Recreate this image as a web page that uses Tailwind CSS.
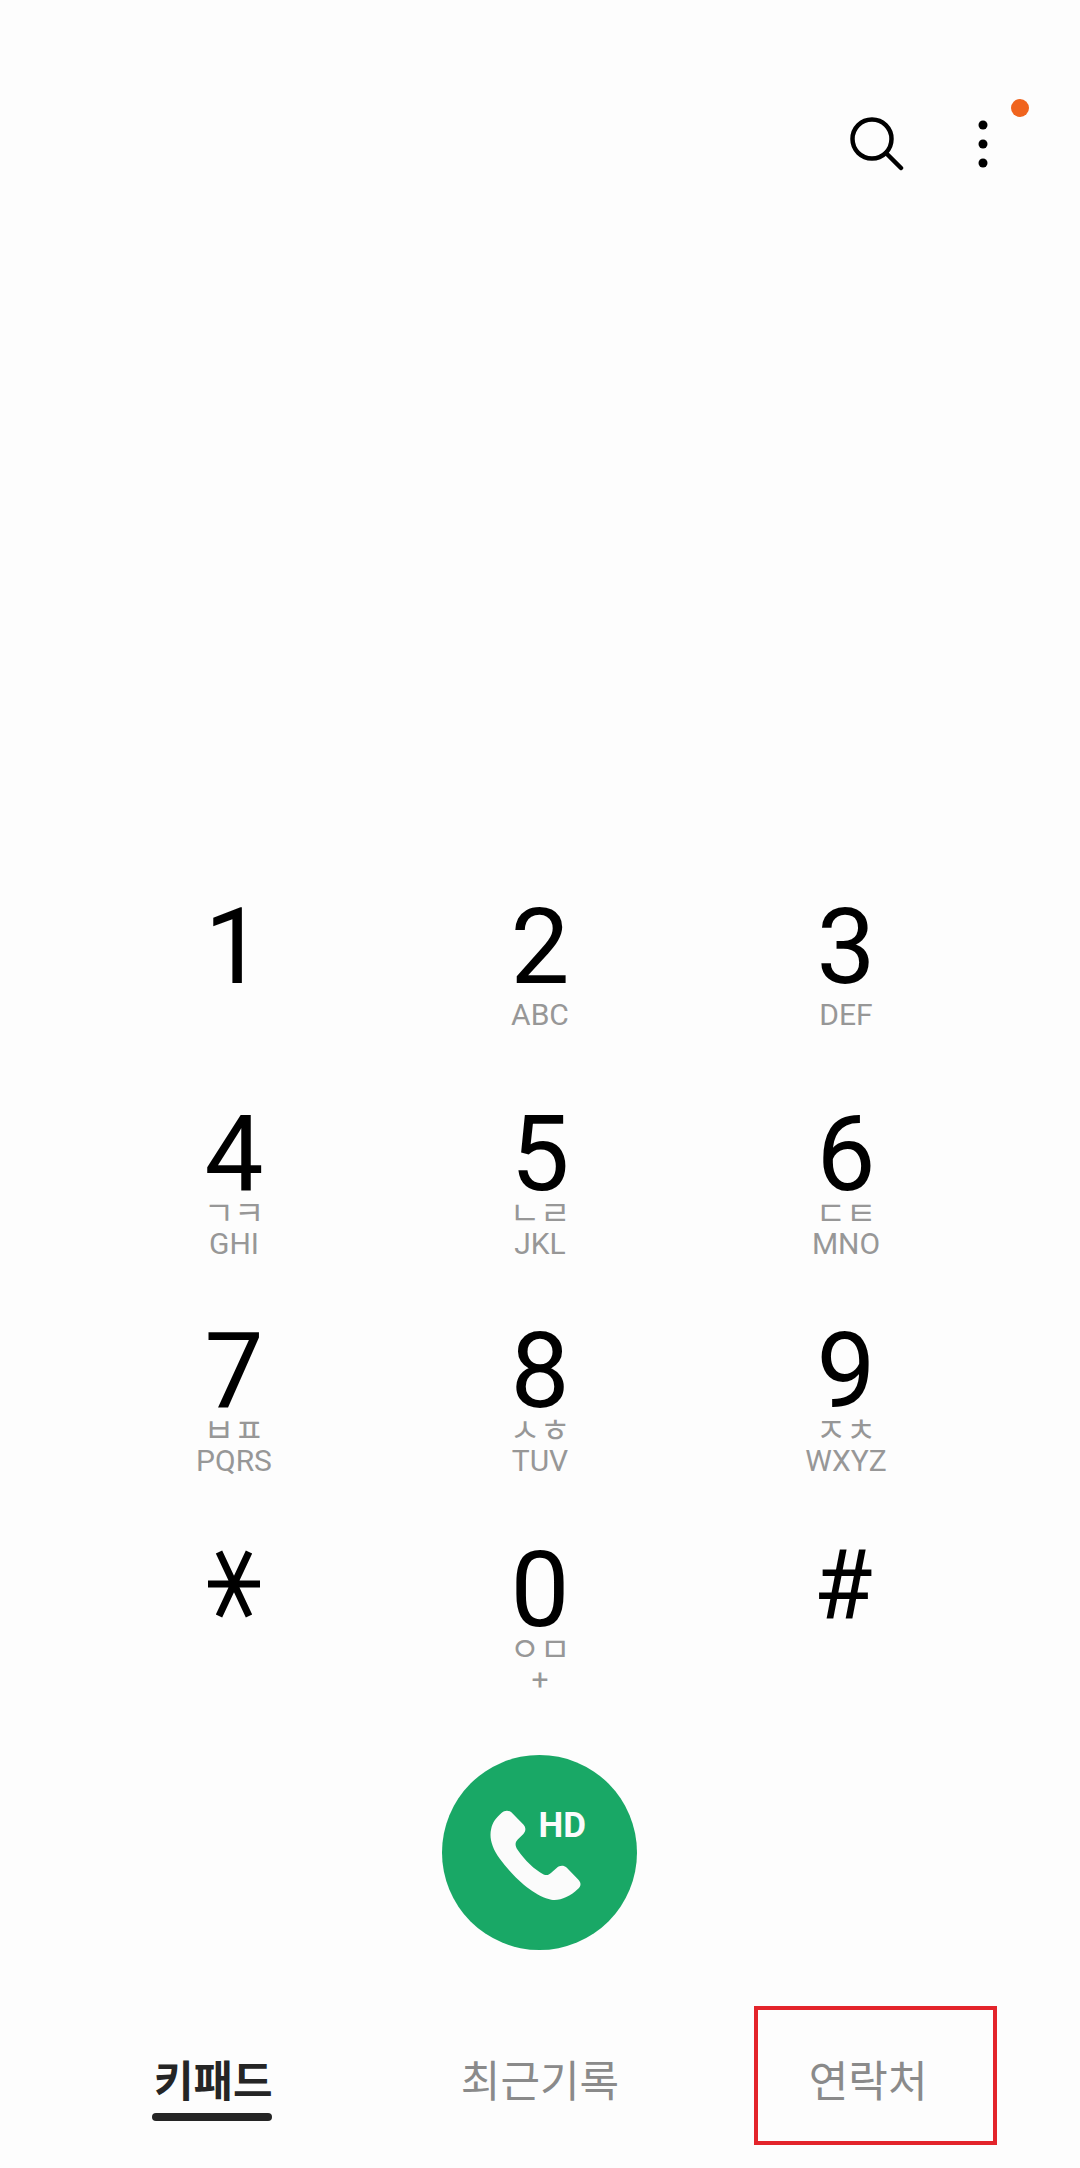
<!DOCTYPE html>
<html lang="ko">
<head>
    <meta charset="UTF-8">
    <title>전화</title>
    <script src="https://cdn.jsdelivr.net/npm/@tailwindcss/browser@4"></script>
</head>
<body class="h-[2168px] w-[1080px] overflow-hidden bg-[#fdfdfd] font-[family-name:Roboto,'Noto_Sans_CJK_KR',sans-serif]">
    <!-- top icons -->
    <header class="flex h-[909px] items-start justify-end gap-[67px] pt-[100px] pr-[85px]">
        <svg class="w-[64px] h-[72px]" viewBox="0 0 64 72" fill="none" stroke="#000" stroke-width="4.5" stroke-linecap="round">
            <circle cx="32" cy="39" r="19.5"/>
            <path d="M46 53 L61 68"/>
        </svg>
        <div class="relative w-[24px] h-[72px]">
            <svg class="w-[24px] h-[72px]" viewBox="0 0 24 72" fill="#000">
                <circle cx="12" cy="25" r="4.5"/>
                <circle cx="12" cy="44" r="4.5"/>
                <circle cx="12" cy="63" r="4.5"/>
            </svg>
            <span class="absolute left-[40px] top-[-1px] w-[18px] h-[18px] rounded-full bg-[#f0641e]"></span>
        </div>
    </header>

    <!-- keypad -->
    <main class="grid grid-cols-3 grid-rows-[207px_217px_219px_203px] px-[81px] text-black">
        <div class="flex flex-col items-center">
            <span class="text-[105px] leading-[78px]">1</span>
        </div>
        <div class="flex flex-col items-center">
            <span class="text-[105px] leading-[78px]">2</span>
            <span class="mt-[13px] text-[30px] leading-[30px] text-[#979797]">ABC</span>
        </div>
        <div class="flex flex-col items-center">
            <span class="text-[105px] leading-[78px]">3</span>
            <span class="mt-[13px] text-[30px] leading-[30px] text-[#979797]">DEF</span>
        </div>

        <div class="flex flex-col items-center">
            <span class="text-[105px] leading-[78px]">4</span>
            <span class="mt-[9px] text-[33px] leading-[22px] text-[#979797]">ㄱㅋ</span>
            <span class="mt-[4px] text-[30px] leading-[30px] text-[#979797]">GHI</span>
        </div>
        <div class="flex flex-col items-center">
            <span class="text-[105px] leading-[78px]">5</span>
            <span class="mt-[9px] text-[33px] leading-[22px] text-[#979797]">ㄴㄹ</span>
            <span class="mt-[4px] text-[30px] leading-[30px] text-[#979797]">JKL</span>
        </div>
        <div class="flex flex-col items-center">
            <span class="text-[105px] leading-[78px]">6</span>
            <span class="mt-[9px] text-[33px] leading-[22px] text-[#979797]">ㄷㅌ</span>
            <span class="mt-[4px] text-[30px] leading-[30px] text-[#979797]">MNO</span>
        </div>

        <div class="flex flex-col items-center">
            <span class="text-[105px] leading-[78px]">7</span>
            <span class="mt-[9px] text-[33px] leading-[22px] text-[#979797]">ㅂㅍ</span>
            <span class="mt-[4px] text-[30px] leading-[30px] text-[#979797]">PQRS</span>
        </div>
        <div class="flex flex-col items-center">
            <span class="text-[105px] leading-[78px]">8</span>
            <span class="mt-[9px] text-[33px] leading-[22px] text-[#979797]">ㅅㅎ</span>
            <span class="mt-[4px] text-[30px] leading-[30px] text-[#979797]">TUV</span>
        </div>
        <div class="flex flex-col items-center">
            <span class="text-[105px] leading-[78px]">9</span>
            <span class="mt-[9px] text-[33px] leading-[22px] text-[#979797]">ㅈㅊ</span>
            <span class="mt-[4px] text-[30px] leading-[30px] text-[#979797]">WXYZ</span>
        </div>

        <div class="flex flex-col items-center">
            <svg class="-mt-[2px] w-[56px] h-[68px]" viewBox="0 0 56 68" stroke="#000" stroke-width="7" aria-label="*">
                <path d="M2 34 H54 M13 2 L43 66 M43 2 L13 66"/>
            </svg>
        </div>
        <div class="flex flex-col items-center">
            <span class="text-[105px] leading-[78px]">0</span>
            <span class="mt-[9px] text-[33px] leading-[22px] text-[#979797]">ㅇㅁ</span>
            <span class="mt-[4px] text-[30px] leading-[30px] text-[#979797]">+</span>
        </div>
        <div class="flex flex-col items-center pr-[6px]">
            <span class="-mt-[6px] text-[96px] leading-[78px]">#</span>
        </div>
    </main>

    <!-- call button -->
    <div class="flex justify-center pr-[2px]">
        <button class="relative flex h-[195px] w-[195px] items-center justify-center rounded-full bg-[#19a866]">
            <svg class="mr-[7px] mt-[6px] w-[95px] h-[93px]" viewBox="205 205 285 280" fill="#fbfbfb">
                <path d="M245 217 C255 208 268 208 277 217 L311 252 C320 262 318 272 311 280 L294 297 C285 306 286 316 293 327 C315 360 345 388 372 402 C380 406 388 404 394 398 L412 382 C420 375 432 374 441 381 L476 417 C486 427 485 438 475 446 C450 470 420 482 395 478 C345 470 280 410 240 355 C215 320 208 290 214 265 C218 245 230 230 245 217 Z"/>
            </svg>
            <span class="absolute left-[97px] top-[49px] text-[35px] leading-[44px] font-bold text-[#fbfbfb]">HD</span>
        </button>
    </div>

    <!-- tabs -->
    <nav class="grid grid-cols-3 px-[50px] pt-[108px]">
        <div class="flex flex-col items-center">
            <span class="text-[43px] leading-[48px] font-bold text-[#252525]">키패드</span>
            <span class="mt-[7px] mr-[2px] h-[8px] w-[120px] rounded-full bg-[#252525]"></span>
        </div>
        <div class="flex flex-col items-center">
            <span class="text-[43px] leading-[48px] text-[#8a8a8a]">최근기록</span>
        </div>
        <div class="relative flex flex-col items-center">
            <span class="pl-[3px] text-[43px] leading-[48px] text-[#8a8a8a]">연락처</span>
            <span class="absolute left-[51px] top-[-52px] h-[139px] w-[243px] border-[4px] border-[#e3242b]"></span>
        </div>
    </nav>
</body>
</html>
